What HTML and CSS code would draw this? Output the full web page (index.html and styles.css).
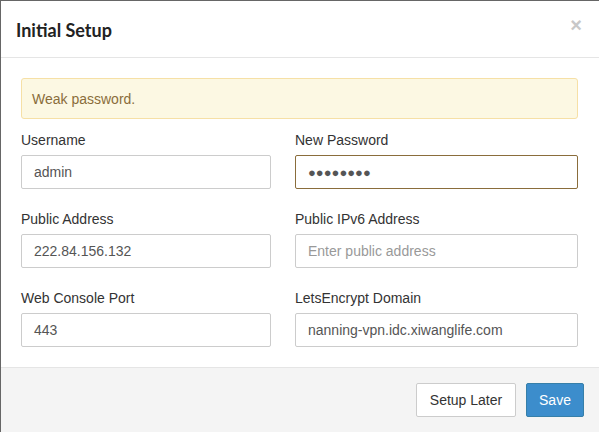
FILE: index.html
```html
<!DOCTYPE html>
<html>
<head>
<meta charset="utf-8">
<link rel="stylesheet" href="styles.css">
</head>
<body>
<div class="modal">
  <div class="modal-header">
    <h4 class="modal-title">Initial Setup</h4>
    <span class="close">×</span>
  </div>
  <div class="modal-body">
    <div class="alert">Weak password.</div>
    <div class="grid">
      <div class="group">
        <label>Username</label>
        <div class="input">admin</div>
      </div>
      <div class="group">
        <label>New Password</label>
        <div class="input warn"><span class="dots">●●●●●●●●</span></div>
      </div>
      <div class="group">
        <label>Public Address</label>
        <div class="input">222.84.156.132</div>
      </div>
      <div class="group">
        <label>Public IPv6 Address</label>
        <div class="input placeholder">Enter public address</div>
      </div>
      <div class="group">
        <label>Web Console Port</label>
        <div class="input">443</div>
      </div>
      <div class="group">
        <label>LetsEncrypt Domain</label>
        <div class="input">nanning-vpn.idc.xiwanglife.com</div>
      </div>
    </div>
  </div>
  <div class="modal-footer">
    <button class="btn btn-default">Setup Later</button>
    <button class="btn btn-primary">Save</button>
  </div>
</div>
</body>
</html>
```

FILE: styles.css
```css
html, body {
  margin: 0;
  padding: 0;
  background: #fff;
}
body {
  font-family: "Liberation Sans", Arial, sans-serif;
  font-size: 14px;
  color: #333;
  width: 599px;
  height: 432px;
  overflow: hidden;
}
.modal {
  width: 599px;
  height: 432px;
  box-sizing: border-box;
  border-left: 1px solid #666;
  border-top: 1px solid #666;
  display: flex;
  flex-direction: column;
}
.modal-header {
  height: 57px;
  border-bottom: 1px solid #e5e5e5;
  display: flex;
  align-items: center;
  justify-content: space-between;
  padding: 0 15px 0 15px;
  box-sizing: border-box;
  flex: none;
}
.modal-title {
  margin: 0;
  font-family: "Lato", "Open Sans", sans-serif;
  font-weight: 700;
  font-size: 18px;
  color: #222;
  padding-top: 1px;
}
.close {
  font-family: "Liberation Sans", Arial, sans-serif;
  font-weight: 700;
  font-size: 20px;
  color: #c8c8c8;
  line-height: 1;
  margin-top: -9px;
  margin-right: 2px;
}
.modal-body {
  padding: 20px 20px 0 20px;
  flex: none;
}
.alert {
  height: 41px;
  box-sizing: border-box;
  width: 557px;
  background: #fcf8e3;
  border: 1px solid #f6e0a6;
  border-radius: 3px;
  color: #8a6d3b;
  padding: 0 10px;
  display: flex;
  align-items: center;
  margin-bottom: 11px;
}
.grid {
  display: grid;
  grid-template-columns: 250px 283px;
  column-gap: 24px;
}
.group {
  margin-bottom: 20px;
}
label {
  display: block;
  line-height: 20px;
  margin-bottom: 5px;
  color: #333;
}
.input {
  height: 34px;
  box-sizing: border-box;
  border: 1px solid #ccc;
  border-radius: 2px;
  padding: 0 12px;
  display: flex;
  align-items: center;
  color: #555;
}
.input.warn {
  border-color: #8a6d3b;
}
.dots {
  font-size: 13px;
  letter-spacing: 0;
  color: #555;
}
.input.placeholder {
  color: #999;
}
.modal-footer {
  flex: 1;
  background: #f4f4f4;
  border-top: 1px solid #e5e5e5;
  padding: 15px 15px 0 0;
  display: flex;
  justify-content: flex-end;
  align-items: flex-start;
  gap: 10px;
}
.btn {
  height: 34px;
  font-family: "Liberation Sans", Arial, sans-serif;
  font-size: 14px;
  padding: 0 12px;
  border-radius: 2px;
  border: 1px solid #ccc;
  box-sizing: border-box;
}
.btn-default {
  background: #fff;
  color: #333;
  border-color: #ccc;
  width: 100px;
}
.btn-primary {
  background: #3c8dcc;
  border-color: #367fa9;
  color: #fff;
  width: 58px;
}
```
